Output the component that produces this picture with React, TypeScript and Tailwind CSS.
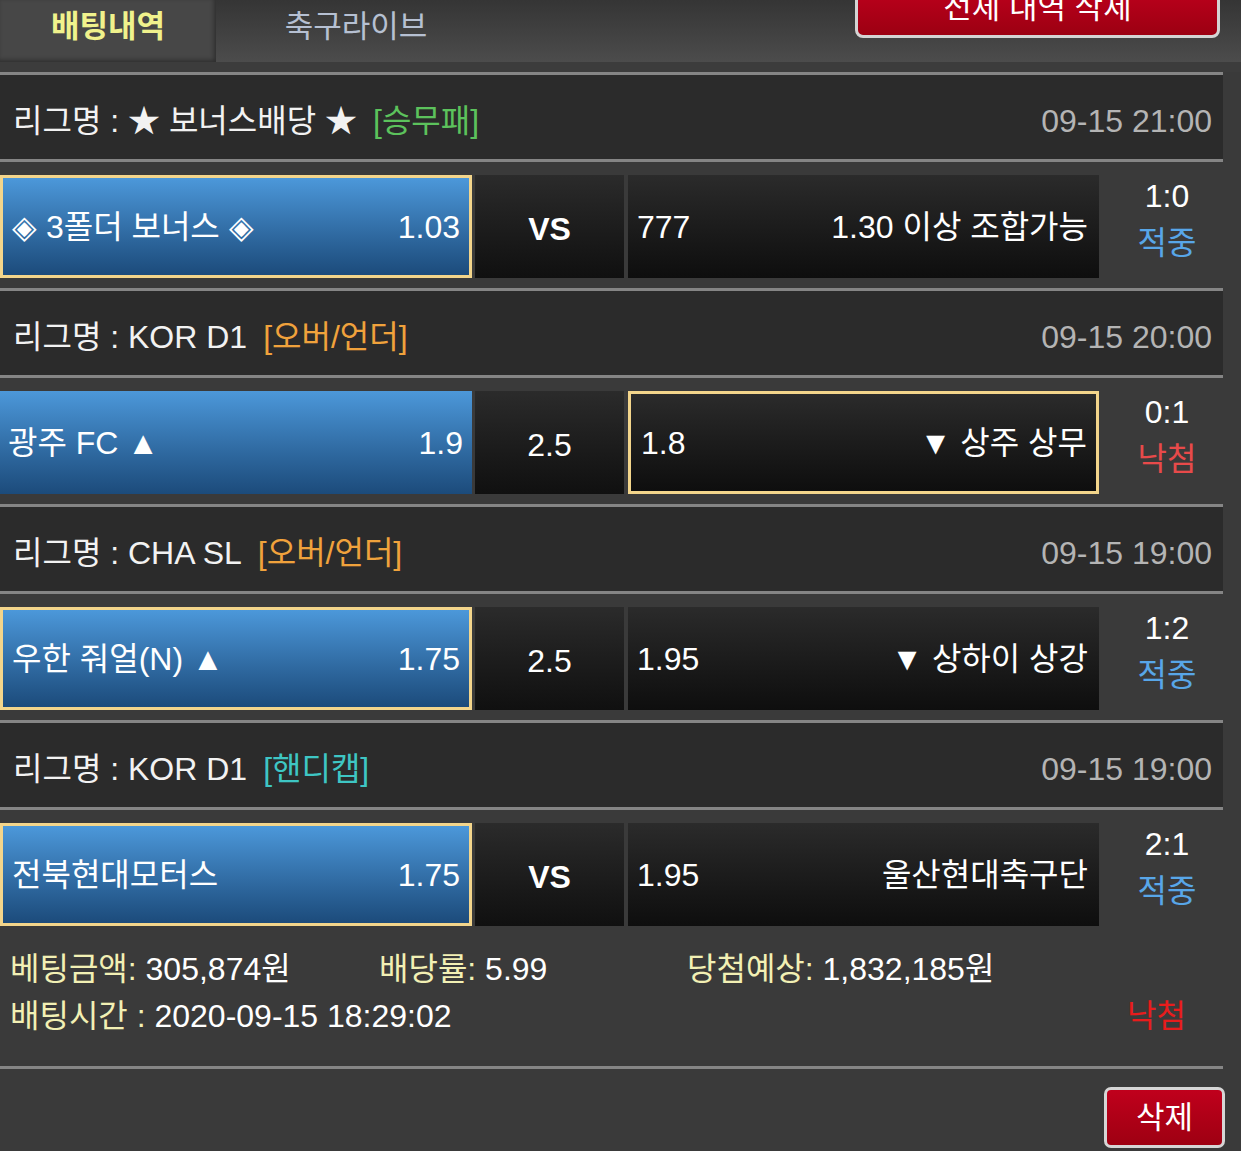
import * as React from "react";

type Bet = {
  league: string;
  type: string;
  typeColor: string;
  time: string;
  home: string;
  homeOdds: string;
  mid: string;
  awayOdds: string;
  away: string;
  pick: "home" | "away";
  score: string;
  result: string;
};

const bets: Bet[] = [
  {
    league: "★ 보너스배당 ★",
    type: "[승무패]",
    typeColor: "text-[#5cc25c]",
    time: "09-15 21:00",
    home: "◈ 3폴더 보너스 ◈",
    homeOdds: "1.03",
    mid: "VS",
    awayOdds: "777",
    away: "1.30 이상 조합가능",
    pick: "home",
    score: "1:0",
    result: "적중",
  },
  {
    league: "KOR D1",
    type: "[오버/언더]",
    typeColor: "text-[#f0a23c]",
    time: "09-15 20:00",
    home: "광주 FC ▲",
    homeOdds: "1.9",
    mid: "2.5",
    awayOdds: "1.8",
    away: "▼ 상주 상무",
    pick: "away",
    score: "0:1",
    result: "낙첨",
  },
  {
    league: "CHA SL",
    type: "[오버/언더]",
    typeColor: "text-[#f0a23c]",
    time: "09-15 19:00",
    home: "우한 줘얼(N) ▲",
    homeOdds: "1.75",
    mid: "2.5",
    awayOdds: "1.95",
    away: "▼ 상하이 상강",
    pick: "home",
    score: "1:2",
    result: "적중",
  },
  {
    league: "KOR D1",
    type: "[핸디캡]",
    typeColor: "text-[#3ec6c4]",
    time: "09-15 19:00",
    home: "전북현대모터스",
    homeOdds: "1.75",
    mid: "VS",
    awayOdds: "1.95",
    away: "울산현대축구단",
    pick: "home",
    score: "2:1",
    result: "적중",
  },
];

function Line() {
  return <div className="h-[3px] w-[1223px] bg-[#858585]" />;
}

function BetBlock({ bet }: { bet: Bet }) {
  const homeSel = bet.pick === "home";
  const awaySel = bet.pick === "away";
  return (
    <>
      <Line />
      {/* league header */}
      <div className="h-[84px] w-[1223px] bg-[#2b2b2b] flex items-center justify-between pt-[8px] pl-[13px] pr-[11px]">
        <div className="flex items-center text-[#f2f2f2]">
          <span>리그명 : {bet.league}</span>
          <span className={`ml-[16px] ${bet.typeColor}`}>{bet.type}</span>
        </div>
        <span className="text-[#b4b4b4]">{bet.time}</span>
      </div>
      <Line />
      {/* match row */}
      <div className="h-[126px] flex items-start pt-[13px]">
        <div
          className={`w-[472px] h-[103px] flex items-center justify-between bg-gradient-to-b from-[#4c98da] to-[#1c4b7b] text-white ${
            homeSel ? "border-[3px] border-[#f3d58b] pl-[9px] pr-[9px]" : "pl-[8px] pr-[9px]"
          }`}
        >
          <span>{bet.home}</span>
          <span>{bet.homeOdds}</span>
        </div>
        <div className="ml-[3px] w-[149px] h-[103px] flex items-center justify-center bg-gradient-to-b from-[#2b2b2b] to-[#101010] text-white">
          <span className={`pt-[4px] ${bet.mid === "VS" ? "font-bold" : ""}`}>{bet.mid}</span>
        </div>
        <div
          className={`ml-[4px] w-[471px] h-[103px] flex items-center justify-between bg-gradient-to-b from-[#2b2b2b] to-[#0e0e0e] text-white ${
            awaySel ? "border-[3px] border-[#f3d58b] pl-[10px] pr-[9px]" : "pl-[9px] pr-[11px]"
          }`}
        >
          <span>{bet.awayOdds}</span>
          <span>{bet.away}</span>
        </div>
        <div className="w-[136px] h-[103px] flex flex-col items-center justify-center leading-[47px] pb-[14px]">
          <span className="text-white">{bet.score}</span>
          <span className={bet.result === "적중" ? "text-[#58a6e8]" : "text-[#e84a4a]"}>{bet.result}</span>
        </div>
      </div>
    </>
  );
}

export default function App() {
  return (
    <div className="w-[1241px] h-[1151px] overflow-hidden bg-[#3a3a3a] font-['Liberation_Sans','Noto_Sans_CJK_KR',sans-serif] text-[32px] leading-none">
      {/* tab bar */}
      <div className="h-[62px] flex items-stretch bg-gradient-to-b from-[#353535] to-[#4c4c4c]">
        <div className="w-[216px] flex items-center justify-center bg-[#474747] shadow-[inset_-2px_-2px_4px_rgba(0,0,0,0.35)] pb-[10px]">
          <span className="text-[#f0f28c] font-bold text-[31px]">배팅내역</span>
        </div>
        <div className="w-[280px] flex items-center justify-center pb-[10px]">
          <span className="text-[#b6c0d2] text-[31px]">축구라이브</span>
        </div>
        <div className="flex-1 flex justify-end pr-[21px]">
          <div className="mt-[-24px] w-[365px] h-[62px] rounded-[8px] border-[3px] border-[#d4d4d4] bg-gradient-to-b from-[#c4001e] to-[#9c0012] flex items-center justify-center text-white text-[31px]">
            전체 내역 삭제
          </div>
        </div>
      </div>
      <div className="h-[10px] bg-[#3c3c3c]" />

      {bets.map((b, i) => (
        <BetBlock key={i} bet={b} />
      ))}

      {/* summary */}
      <div className="pt-[10px] pb-[26px] pl-[10px] leading-[47px]">
        <div className="flex">
          <div className="w-[369px]">
            <span className="text-[#f2f0b4]">베팅금액: </span>
            <span className="text-white">305,874원</span>
          </div>
          <div className="w-[308px]">
            <span className="text-[#f2f0b4]">배당률: </span>
            <span className="text-white">5.99</span>
          </div>
          <div>
            <span className="text-[#f2f0b4]">당첨예상: </span>
            <span className="text-white">1,832,185원</span>
          </div>
        </div>
        <div className="flex justify-between pr-[55px]">
          <div>
            <span className="text-[#f2f0b4]">배팅시간 : </span>
            <span className="text-white">2020-09-15 18:29:02</span>
          </div>
          <span className="text-[#e81c1c]">낙첨</span>
        </div>
      </div>
      <Line />
      <div className="flex justify-end pt-[18px] pr-[16px]">
        <div className="w-[121px] h-[61px] rounded-[7px] border-[3px] border-[#d6d6d6] bg-gradient-to-b from-[#c0001c] to-[#9e0012] flex items-center justify-center text-white text-[31px]">
          삭제
        </div>
      </div>
    </div>
  );
}
